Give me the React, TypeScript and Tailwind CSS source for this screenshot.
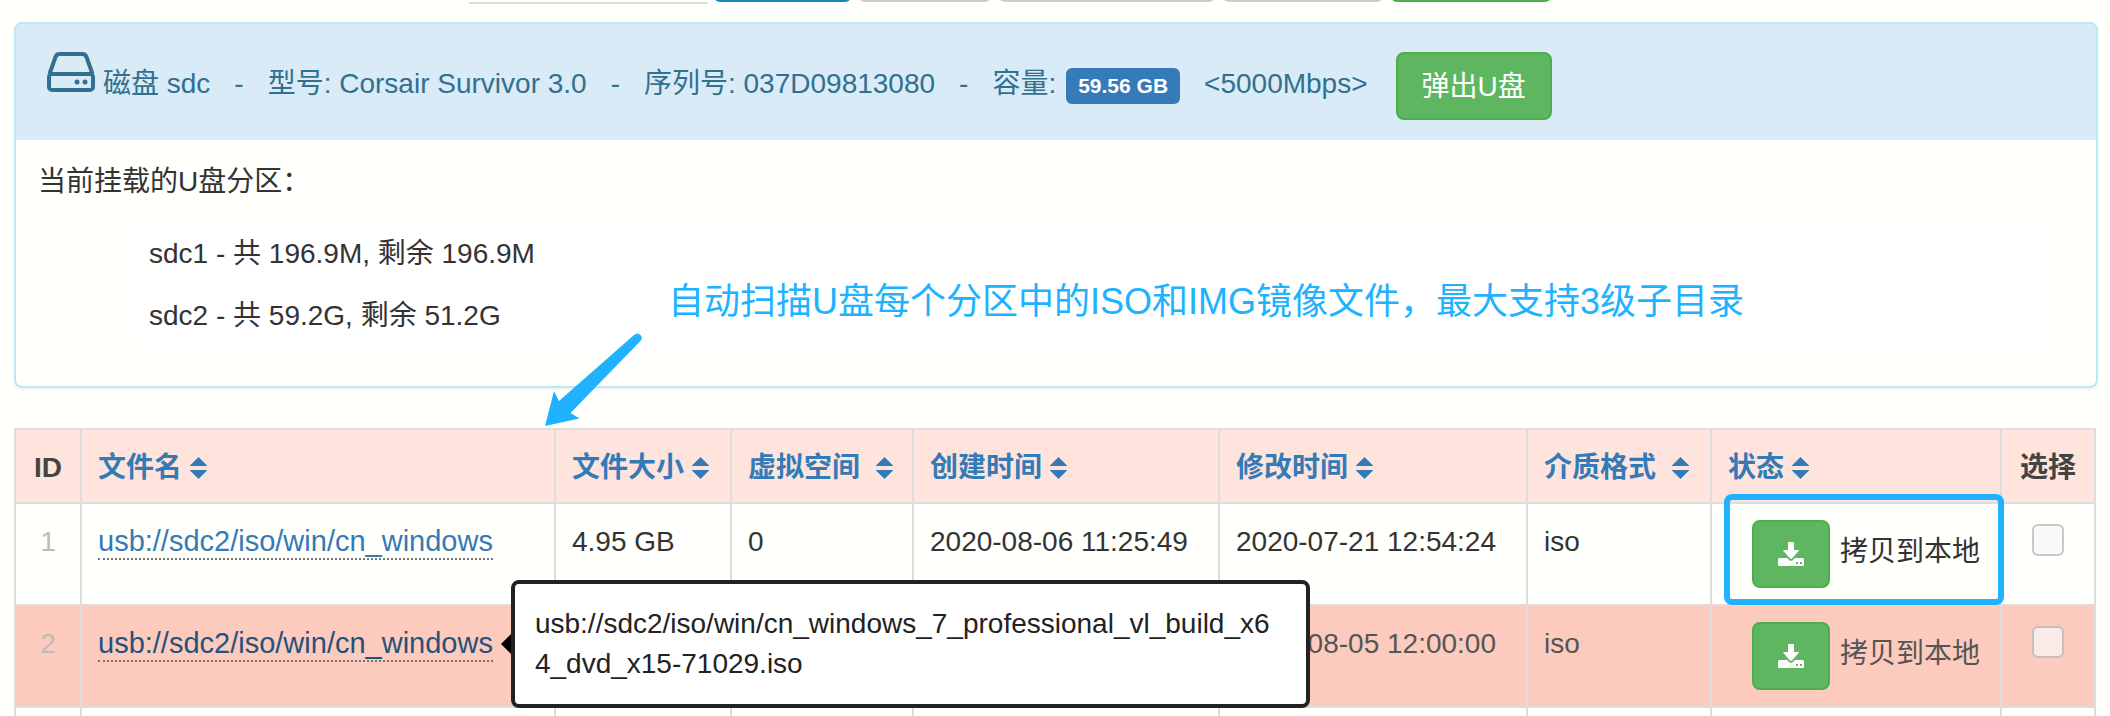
import React from "react";

type Row = {
  id: number;
  name: string;
  size: string;
  virtual: string;
  created: string;
  modified: string;
  format: string;
  tip?: string;
  marked?: boolean;
};

const rows: Row[] = [
  {
    id: 1,
    name: "usb://sdc2/iso/win/cn_windows",
    size: "4.95 GB",
    virtual: "0",
    created: "2020-08-06 11:25:49",
    modified: "2020-07-21 12:54:24",
    format: "iso",
    marked: true,
  },
  {
    id: 2,
    name: "usb://sdc2/iso/win/cn_windows",
    size: "",
    virtual: "",
    created: "",
    modified: "2020-08-05 12:00:00",
    format: "iso",
    tip: "usb://sdc2/iso/win/cn_windows_7_professional_vl_build_x64_dvd_x15-71029.iso",
  },
];

const columns = [
  { label: "ID", width: "w-[66px]" },
  { label: "文件名", width: "w-auto", sort: "ml-2" },
  { label: "文件大小", width: "w-[176px]", sort: "ml-2" },
  { label: "虚拟空间", width: "w-[182px]", sort: "ml-4" },
  { label: "创建时间", width: "w-[306px]", sort: "ml-2" },
  { label: "修改时间", width: "w-[308px]", sort: "ml-2" },
  { label: "介质格式", width: "w-[184px]", sort: "ml-4" },
  { label: "状态", width: "w-[290px]", sort: "ml-2" },
  { label: "选择", width: "w-[94px]" },
];

function DiskIcon() {
  return (
    <svg className="h-10 w-12 shrink-0" viewBox="0 0 48 40" fill="none" stroke="currentColor" strokeWidth="4" aria-hidden="true">
      <path d="M2.500 22 8.500 5Q9.500 2 12.500 2H35.500Q38.500 2 39.500 5L45.500 22" />
      <rect x="2" y="22" width="44" height="16" rx="3" />
      <circle cx="30" cy="30" r="2.500" fill="currentColor" stroke="none" />
      <circle cx="38" cy="30" r="2.500" fill="currentColor" stroke="none" />
    </svg>
  );
}

function SortIcon() {
  return (
    <svg className="h-[22px] w-[17px]" viewBox="0 0 16 22" preserveAspectRatio="none" fill="currentColor" aria-hidden="true">
      <path d="M8 0 16 8.500V9H0V8.500Z" />
      <path d="M8 22 0 13.500V13H16V13.500Z" />
    </svg>
  );
}

function DownloadIcon() {
  return (
    <svg className="h-6 w-[26px]" viewBox="0 0 26 24" fill="currentColor" aria-hidden="true">
      <path d="M11 0h4Q16 0 16 1v7h4.500q.8 0 .3.800L14 16.500q-1 .8-2 0L5.200 8.800Q4.700 8 5.500 8H10V1Q10 0 11 0Z" />
      <path d="M1.500 16H9l2.300 2.200q1.700 1.300 3.400 0L17 16h7.500Q26 16 26 17.500v5Q26 24 24.500 24h-23Q0 24 0 22.500v-5Q0 16 1.500 16ZM18 20v2h2v-2Zm4 0v2h2v-2Z" fillRule="evenodd" />
    </svg>
  );
}

const box = "border-2 border-[#ddd] px-4 align-top leading-10";
const cell = `${box} pt-[18px]`;

export default function App() {
  return (
    <div className="h-screen overflow-hidden bg-[#fffffc] font-['Liberation_Sans','Noto_Sans_CJK_SC',sans-serif] text-[28px] leading-10 text-[#333]">
      <div className="flex h-1 items-end justify-center overflow-hidden pr-[91px]">
        <input aria-label="关键字" className="mr-1.5 h-12 w-[239px] border-b-2 border-[#ddd]" />
        <div className="mb-0.5 flex gap-2">
          <button aria-label="搜索" className="h-12 w-[137px] rounded-md bg-[#1488b8]" />
          <button aria-label="刷新" className="h-12 w-[132px] rounded-md bg-[#ccc]" />
          <button aria-label="选择全部" className="h-12 w-[216px] rounded-md bg-[#ccc]" />
          <button aria-label="删除" className="h-12 w-40 rounded-md bg-[#ccc]" />
          <button aria-label="添加" className="h-12 w-40 rounded-md bg-[#4cae4c]" />
        </div>
      </div>

      <section className="mt-[18px] mr-3 ml-3.5 overflow-hidden rounded-lg border-2 border-[#bce8f1] shadow-[0_2px_2px_rgba(0,0,0,0.05)]">
        <header className="flex items-start bg-[#d9ebf6] px-[31px] pt-7 pb-5 text-[#31708f]">
          <DiskIcon />
          <div className="mt-3 ml-2 flex gap-6 whitespace-nowrap">
            <span>磁盘 sdc</span>
            <span>-</span>
            <span>型号: Corsair Survivor 3.0</span>
            <span>-</span>
            <span>序列号: 037D09813080</span>
            <span>-</span>
            <span>容量:</span>
          </div>
          <span className="mt-4 ml-2.5 rounded-md bg-[#367ab7] px-3 text-[21px] leading-9 font-bold text-white">59.56 GB</span>
          <p className="mt-3 ml-6">&lt;5000Mbps&gt;</p>
          <button className="ml-7 h-[68px] rounded-lg border-2 border-[#4cae4c] bg-[#5eb760] px-6 pt-0.5 text-white">弹出U盘</button>
        </header>
        <div className="px-[22px] pt-[22px] pb-[38px]">
          <p>当前挂载的U盘分区：</p>
          <div className="relative mt-4 mr-5 ml-[98px] bg-white">
            <ul className="px-[13px] pt-4 pb-3">
              <li>sdc1 - 共 196.9M, 剩余 196.9M</li>
              <li className="mt-[22px]">sdc2 - 共 59.2G, 剩余 51.2G</li>
            </ul>
            <p className="absolute top-[60px] left-[532px] text-4xl leading-[48px] whitespace-nowrap text-[#20b2ff]">
              自动扫描U盘每个分区中的ISO和IMG镜像文件，最大支持3级子目录
            </p>
          </div>
        </div>
      </section>

      <div className="relative mx-3.5 mt-10">
        <svg className="absolute -top-24 left-[530px] h-[96px] w-[100px] text-[#20b2ff]" viewBox="0 0 100 96" fill="currentColor" aria-hidden="true">
          <path d="M1 94 10 59l5 10L90 3q4-3 6.500 0t0 6L26.500 81l9 5.500Z" />
        </svg>
        <table className="w-full table-fixed border-collapse">
          <colgroup>
            {columns.map((c) => (
              <col key={c.label} className={c.width} />
            ))}
          </colgroup>
          <thead>
            <tr className="h-[74px] bg-[#fee4dc] text-left text-[#444]">
              {columns.map((c) => (
                <th key={c.label} className={`${cell} whitespace-nowrap`}>
                  {c.sort ? (
                    <a href="#" className="flex items-center text-[#337ab7]">
                      {c.label}
                      <span className={c.sort}>
                        <SortIcon />
                      </span>
                    </a>
                  ) : (
                    <span className="flex justify-center">{c.label}</span>
                  )}
                </th>
              ))}
            </tr>
          </thead>
          <tbody>
            {rows.map((r) => (
              <tr key={r.id} className={r.tip ? "h-[102px] bg-[#fdcbbd] text-[#555]" : "h-[102px]"}>
                <td className={`${cell} text-center text-[#bbb]`}>{r.id}</td>
                <td className={cell}>
                  <div className="relative inline-block">
                    <a href="#" className={r.tip ? "block border-b-2 border-dotted border-[#777] text-[29px] leading-[34px] text-[#23527c]" : "block border-b-2 border-dotted border-[#777] text-[29px] leading-[34px] text-[#337ab7]"}>
                      {r.name}
                    </a>
                    {r.tip && (
                      <div role="tooltip" className="absolute top-1/2 left-full z-10 ml-[18px] w-[799px] -translate-y-1/2 rounded-lg border-4 border-[#222] bg-white py-5 pr-8 pl-5 break-all text-[#222]">
                        <span className="absolute top-1/2 right-full mr-1 -translate-y-1/2 border-y-10 border-r-10 border-y-transparent border-r-black" />
                        {r.tip}
                      </div>
                    )}
                  </div>
                </td>
                <td className={cell}>{r.size}</td>
                <td className={cell}>{r.virtual}</td>
                <td className={cell}>{r.created}</td>
                <td className={cell}>{r.modified}</td>
                <td className={cell}>{r.format}</td>
                <td className={`${box} relative pt-4`}>
                  <div className="flex items-center pl-6">
                    <button aria-label="拷贝到本地" className="flex h-[68px] w-[78px] shrink-0 items-center justify-center rounded-lg border-2 border-[#4cae4c] bg-[#5eb760] text-white">
                      <DownloadIcon />
                    </button>
                    <span className="mb-1 ml-2.5 whitespace-nowrap">拷贝到本地</span>
                  </div>
                  {r.marked && <span className="absolute -top-2.5 -right-1 -bottom-px left-3 rounded-lg border-6 border-[#20b2ff]" />}
                </td>
                <td className={`${box} pt-4 text-center`}>
                  <input
                    type="checkbox"
                    aria-label={`选择 ${r.id}`}
                    className="mt-1 size-8 appearance-none rounded-md border-2 border-black/20 bg-[#f7f7f7]/75"
                  />
                </td>
              </tr>
            ))}
            <tr className="h-[102px]">
              {columns.map((c) => (
                <td key={c.label} className={cell} />
              ))}
            </tr>
          </tbody>
        </table>
      </div>
    </div>
  );
}
